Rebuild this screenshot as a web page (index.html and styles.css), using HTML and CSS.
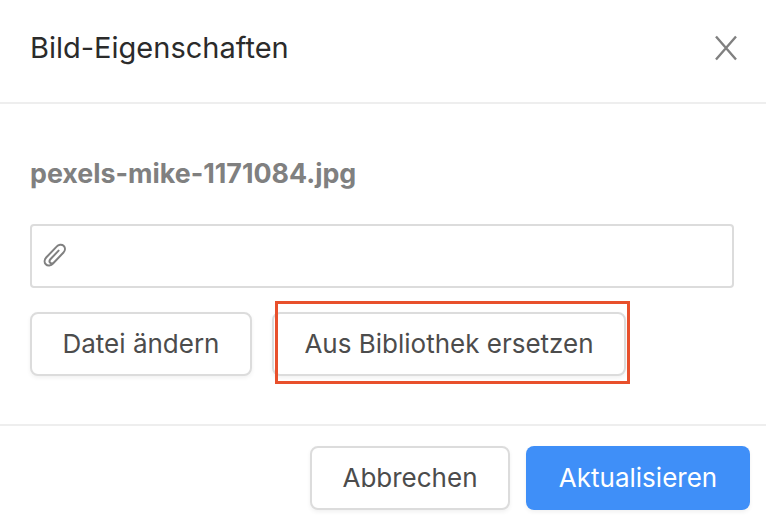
FILE: index.html
```html
<!DOCTYPE html>
<html lang="de">
<head>
    <meta charset="UTF-8">
    <meta name="viewport" content="width=device-width, initial-scale=1.0">
    <title>Bild-Eigenschaften</title>
    <link rel="stylesheet" href="styles.css">
</head>
<body>
    <div class="dialog">
        <div class="dialog-header">
            <div class="dialog-title">Bild-Eigenschaften</div>
            <svg class="close-icon" width="24" height="26" viewBox="0 0 24 26">
                <path d="M2 1.5 L22 24.5 M22 1.5 L2 24.5" fill="none" stroke="#808080" stroke-width="2.4"/>
            </svg>
        </div>
        <div class="dialog-body">
            <div class="file-name">pexels-mike-1171084.jpg</div>
            <div class="file-input">
                <svg class="clip-icon" width="24" height="26" viewBox="0 0 24 26">
                    <path d="M20.5 9.5 L10 20.5 C8 22.8 4.6 23.2 2.8 21.3 C1 19.4 1.4 16.4 3.4 14.3 L13.6 3.6 C15.4 1.6 18.6 1 20.6 2.8 C22.6 4.7 22.2 7.6 20.4 9.6 L11 19.4 C9.9 20.6 8.2 20.8 7.2 19.8 C6.2 18.8 6.5 17.2 7.6 16 L15.6 7.6" fill="none" stroke="#808080" stroke-width="2" stroke-linecap="round"/>
                </svg>
            </div>
            <div class="file-actions">
                <button class="btn btn-change">Datei ändern</button>
                <button class="btn btn-library">Aus Bibliothek ersetzen</button>
                <div class="highlight-box"></div>
            </div>
        </div>
        <div class="dialog-footer">
            <button class="btn btn-cancel">Abbrechen</button>
            <button class="btn btn-primary">Aktualisieren</button>
        </div>
    </div>
</body>
</html>
```

FILE: styles.css
```css
body {
    margin: 0;
    background-color: #fff;
    font-family: "Inter", "Liberation Sans", sans-serif;
}
.dialog {
    width: 766px;
    height: 520px;
    display: flex;
    flex-direction: column;
    overflow: hidden;
}
.dialog-header {
    height: 102px;
    padding: 0 28px 0 30px;
    display: flex;
    align-items: center;
    justify-content: space-between;
    border-bottom: 2px solid #eeeeee;
}
.dialog-title {
    font-size: 29px;
    color: #2b2b2b;
    margin-top: -7px;
}
.close-icon {
    margin-top: -7px;
}
.dialog-body {
    height: 322px;
    box-sizing: border-box;
    padding: 51px 32px 0 30px;
    border-bottom: 2px solid #eeeeee;
}
.file-name {
    font-size: 26.8px;
    font-weight: 700;
    line-height: 36px;
    color: #808080;
}
.file-input {
    height: 64px;
    box-sizing: border-box;
    margin-top: 33px;
    padding-left: 11px;
    display: flex;
    align-items: center;
    border: 2px solid #dcdcdc;
    border-radius: 4px;
}
.file-actions {
    position: relative;
    display: flex;
    gap: 20px;
    margin-top: 24px;
}
.btn {
    height: 64px;
    box-sizing: border-box;
    padding: 0 0 2px;
    font-family: inherit;
    font-size: 26px;
    color: #4c4c4c;
    background-color: #fff;
    border: 2px solid #dcdcdc;
    border-radius: 8px;
    box-shadow: 0 2px 4px rgba(0, 0, 0, 0.06);
}
.btn-change {
    width: 222px;
}
.btn-library {
    width: 354px;
}
/* roter Rahmen um den Bibliothek-Button */
.highlight-box {
    position: absolute;
    left: 245px;
    top: -11px;
    width: 355px;
    height: 83px;
    box-sizing: border-box;
    border: 3px solid #e8502c;
}
.dialog-footer {
    display: flex;
    justify-content: flex-end;
    gap: 16px;
    padding: 20px 16px 0 0;
}
.btn-cancel {
    width: 200px;
}
.btn-primary {
    width: 224px;
    color: #fff;
    background-color: #3f8ff8;
    border: none;
}
```
